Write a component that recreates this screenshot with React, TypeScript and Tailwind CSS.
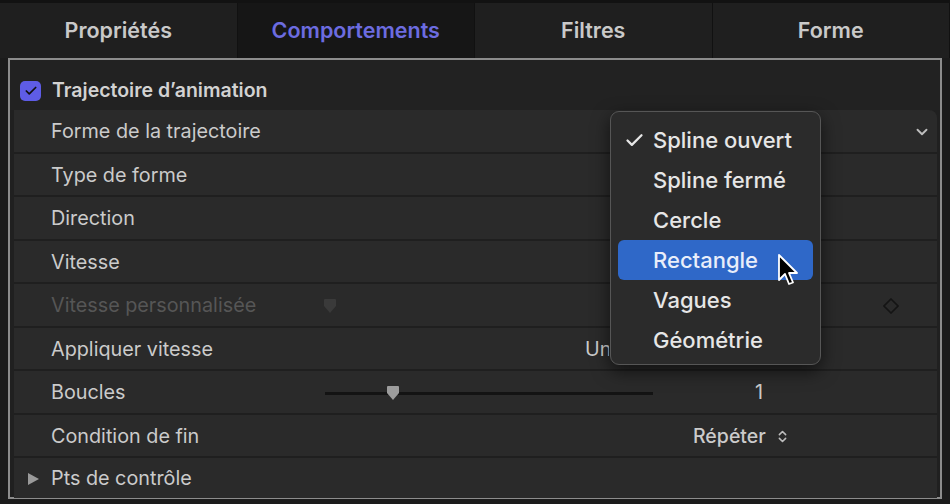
import { Check, ChevronDown, ChevronsUpDown } from 'lucide-react'

const tabs = ['Propriétés', 'Comportements', 'Filtres', 'Forme']

const menuItems = ['Spline ouvert', 'Spline fermé', 'Cercle', 'Rectangle', 'Vagues', 'Géométrie']

function SliderThumb({ dim }: { dim?: boolean }) {
  return (
    <svg width="16" height="16" viewBox="0 0 16 16" className="block">
      <path d="M2 2 Q2 1 3 1 L13 1 Q14 1 14 2 L14 8 L8 15 L2 8 Z" fill={dim ? '#3a3a3a' : '#9c9c9c'} />
    </svg>
  )
}

function Row({ label, dim, children }: { label: string; dim?: boolean; children?: React.ReactNode }) {
  return (
    <div className="relative flex h-[43.5px] items-center border-b-2 border-[#1f1f1f] pl-[37px] pr-4 pt-[3px]">
      <span className={dim ? 'text-[19.8px] text-[#565656]' : 'text-[19.8px] text-[#cbcbcb]'}>{label}</span>
      {children}
    </div>
  )
}

export default function App() {
  return (
    <div className="relative h-[504px] w-[950px] overflow-hidden bg-[#1b1b1b] font-['Inter',sans-serif]">
      {/* tab bar */}
      <div className="flex h-[58px] border-t-[3px] border-[#121212]">
        {tabs.map((t, i) => (
          <div
            key={t}
            className={
              'flex flex-1 items-center justify-center border-r border-[#111] text-[21.5px] font-semibold ' +
              (i === 1 ? 'bg-[#161616] text-[#6c6ce0]' : 'bg-[#1f1f1f] text-[#c9c9c9]')
            }
          >
            {t}
          </div>
        ))}
      </div>

      {/* panel */}
      <div className="mx-2 h-[441px] border-2 border-[#8c8c8c] bg-[#202020]">
        <div className="flex h-[50px] items-center gap-[11px] bg-[#222222] pl-[10px] pt-[11px]">
          <div className="flex h-[20px] w-[21px] items-center justify-center rounded-[5px] bg-[#5e5ce6]">
            <Check size={14} strokeWidth={3} color="#111" />
          </div>
          <span className="text-[19.5px] font-semibold text-[#d2d2d2]">Trajectoire d’animation</span>
        </div>

        <div className="ml-[4px] mr-[3px] rounded-tr-[8px] bg-[#2a2a2a]">
          <Row label="Forme de la trajectoire">
            <ChevronDown size={18} strokeWidth={2.5} color="#bdbdbd" className="ml-auto mr-[-10px]" />
          </Row>
          <Row label="Type de forme" />
          <Row label="Direction" />
          <Row label="Vitesse" />
          <Row label="Vitesse personnalisée" dim>
            <div className="absolute left-[308px] top-[14px]">
              <SliderThumb dim />
            </div>
            <svg width="16" height="16" viewBox="0 0 16 16" className="ml-auto mr-[22px]">
              <path d="M8 1 L15 8 L8 15 L1 8 Z" fill="none" stroke="#141414" strokeWidth="1.6" />
            </svg>
          </Row>
          <Row label="Appliquer vitesse">
            {/* value is mostly hidden under the open menu */}
            <span className="absolute left-[571px] w-[24px] overflow-hidden whitespace-nowrap text-[19.8px] text-[#cbcbcb]">
              Uniforme
            </span>
          </Row>
          <Row label="Boucles">
            <div className="absolute left-[311px] top-[21px] h-[3px] w-[328px] bg-[#131313]" />
            <div className="absolute left-[371px] top-[14px]">
              <SliderThumb />
            </div>
            <span className="absolute left-[741px] text-[19.8px] text-[#cbcbcb]">1</span>
          </Row>
          <Row label="Condition de fin">
            <div className="absolute left-[679px] flex items-center gap-[9px]">
              <span className="text-[19.5px] font-medium text-[#cbcbcb]">Répéter</span>
              <ChevronsUpDown size={15} strokeWidth={2.5} color="#bdbdbd" />
            </div>
          </Row>
          <div className="relative flex h-[40px] items-center pl-[12px] pt-[2px]">
            <svg width="14" height="14" viewBox="0 0 14 14" className="mr-[11px]">
              <path d="M2 1 L13 7 L2 13 Z" fill="#9a9a9a" />
            </svg>
            <span className="text-[19.8px] text-[#cbcbcb]">Pts de contrôle</span>
          </div>
        </div>
      </div>

      {/* popup menu */}
      <div className="absolute left-[610px] top-[111px] h-[254px] w-[211px] rounded-[9px] border border-[#565656] bg-[#2b2b2b] px-[7px] pt-[8px] shadow-[0_6px_18px_rgba(0,0,0,0.6)]">
        {menuItems.map((m, i) => (
          <div
            key={m}
            className={
              'relative flex h-[40px] items-center rounded-[6px] pl-[35px] text-[22px] font-medium ' +
              (i === 3 ? 'bg-[#2f68c8] text-[#e9eefa]' : 'text-[#e6e6e6]')
            }
          >
            {i === 0 && (
              <Check size={21} strokeWidth={2.6} color="#e6e6e6" className="absolute left-[6px]" />
            )}
            {m}
          </div>
        ))}
      </div>

      {/* mouse cursor */}
      <svg width="22" height="34" viewBox="0 0 22 34" className="absolute left-[777px] top-[254px]">
        <path
          d="M2 1 L2 26 L8 20 L12 30 L16 28.5 L12 19 L20 19 Z"
          fill="#000"
          stroke="#fff"
          strokeWidth="1.8"
          strokeLinejoin="round"
        />
      </svg>
    </div>
  )
}
